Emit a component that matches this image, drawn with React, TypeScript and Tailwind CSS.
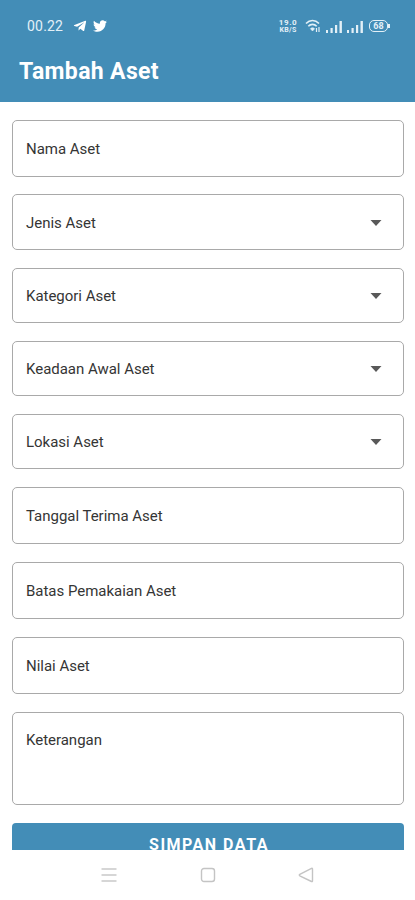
import { FaTelegramPlane, FaTwitter } from "react-icons/fa";

interface Field {
  label: string;
  type: "text" | "select" | "textarea";
}

const fields: Field[] = [
  { label: "Nama Aset", type: "text" },
  { label: "Jenis Aset", type: "select" },
  { label: "Kategori Aset", type: "select" },
  { label: "Keadaan Awal Aset", type: "select" },
  { label: "Lokasi Aset", type: "select" },
  { label: "Tanggal Terima Aset", type: "text" },
  { label: "Batas Pemakaian Aset", type: "text" },
  { label: "Nilai Aset", type: "text" },
  { label: "Keterangan", type: "textarea" },
];

const heights = {
  text: "h-[57px] items-center pt-[1.2px]",
  select: "h-[55.4px] items-center pt-[1.2px]",
  textarea: "h-[93.4px] items-start pt-[17px]",
};

const Signal = () => (
  <svg width="17" height="13" viewBox="0 0 17 13" fill="#e3f0f7">
    <rect x="0" y="10" width="2" height="3" />
    <rect x="4.5" y="8" width="2.2" height="5" />
    <rect x="9" y="5" width="2.2" height="8" />
    <rect x="13.5" y="1" width="2.4" height="12" />
  </svg>
);

const StatusBar = () => (
  <div className="flex h-[52px] items-center pl-[27px] pr-[27px] text-[#e3f0f7]">
    <span className="text-[14px] leading-4 tracking-[0.2px]">00.22</span>
    <FaTelegramPlane className="ml-[10px] size-[14px] text-white" />
    <FaTwitter className="ml-[6px] size-[14px] text-white" />

    <div className="ml-auto flex items-center">
      <div className="flex w-[19px] flex-col items-center font-bold">
        <span className="text-[8px] leading-[8px] tracking-[0.6px]">19.0</span>
        <span className="text-[7px] leading-[7px] tracking-[0.3px]">KB/S</span>
      </div>
      <svg
        className="ml-[7px]"
        width="16"
        height="14"
        viewBox="0 0 16 14"
        fill="none"
        stroke="#e3f0f7"
        strokeWidth="1.6"
      >
        <path d="M1 4.5c3.8-4 9.2-4 13 0" />
        <path d="M3.3 7.2c2.4-2.5 6-2.5 8.4 0" />
        <path d="M5.4 9.7c1.2-1.2 3-1.2 4.2 0L7.5 12z" fill="#e3f0f7" strokeWidth="0.6" />
        <path d="M11.5 9v4M14 8v5" strokeWidth="1.2" />
      </svg>
      <div className="ml-[5px] flex gap-[4.5px]">
        <Signal />
        <Signal />
      </div>
      <div className="relative ml-[5px] flex h-3 w-[19px] items-center justify-center rounded-[5px] border-[1.5px] border-[#e3f0f7] text-[9px] font-bold leading-none">
        68
        <span className="absolute -right-[2.5px] top-[3px] h-1 w-[1.5px] bg-[#e3f0f7]" />
      </div>
    </div>
  </div>
);

const FormField = ({ field }: { field: Field }) => (
  <div
    className={`flex shrink-0 justify-between rounded-[5px] border-[1.5px] border-[#a9a9a9] pl-[13px] pr-[21px] ${heights[field.type]}`}
  >
    <span className="text-[15px] leading-5 tracking-[-0.02px] text-[#353535]">
      {field.label}
    </span>
    {field.type === "select" && (
      <svg width="12" height="6" viewBox="0 0 12 6">
        <path d="M0.5 0h11L6 6z" fill="#595959" />
      </svg>
    )}
  </div>
);

export default function App() {
  return (
    <div className="flex h-[900px] w-full flex-col overflow-hidden bg-white font-['Roboto',sans-serif]">
      <header className="h-[102px] shrink-0 bg-[#438db7]">
        <StatusBar />
        <h1 className="pl-[19px] text-[23px] font-bold leading-[39px] tracking-[0.35px] text-white">
          Tambah Aset
        </h1>
      </header>

      <main className="flex h-[748px] shrink-0 flex-col gap-[17.8px] overflow-hidden pl-3 pr-[11px] pt-[17.6px]">
        {fields.map((field) => (
          <FormField key={field.label} field={field} />
        ))}
        <button className="h-12 shrink-0 rounded-[4px] bg-[#438db7] pb-1 pl-[2px] text-[16px] font-bold tracking-[1.5px] text-white">
          SIMPAN DATA
        </button>
      </main>

      <nav className="flex flex-1 items-center justify-between px-[101px]">
        <svg width="16" height="16" viewBox="0 0 16 16" stroke="#c9c9c9" strokeWidth="1.5">
          <path d="M0.5 2H15.5M0.5 8H15.5M0.5 14H15.5" />
        </svg>
        <svg width="16" height="16" viewBox="0 0 16 16" fill="none" stroke="#c4c4c4" strokeWidth="1.4">
          <rect x="1.5" y="1.5" width="13" height="13" rx="2.5" />
        </svg>
        <svg width="16" height="16" viewBox="0 0 16 16" fill="none" stroke="#c4c4c4" strokeWidth="1.4">
          <path d="M14.5 2v12q0 1-1 .5L1.8 8.8q-1-.8 0-1.4L13.5 1.3q1-.4 1 .7z" />
        </svg>
      </nav>
    </div>
  );
}
